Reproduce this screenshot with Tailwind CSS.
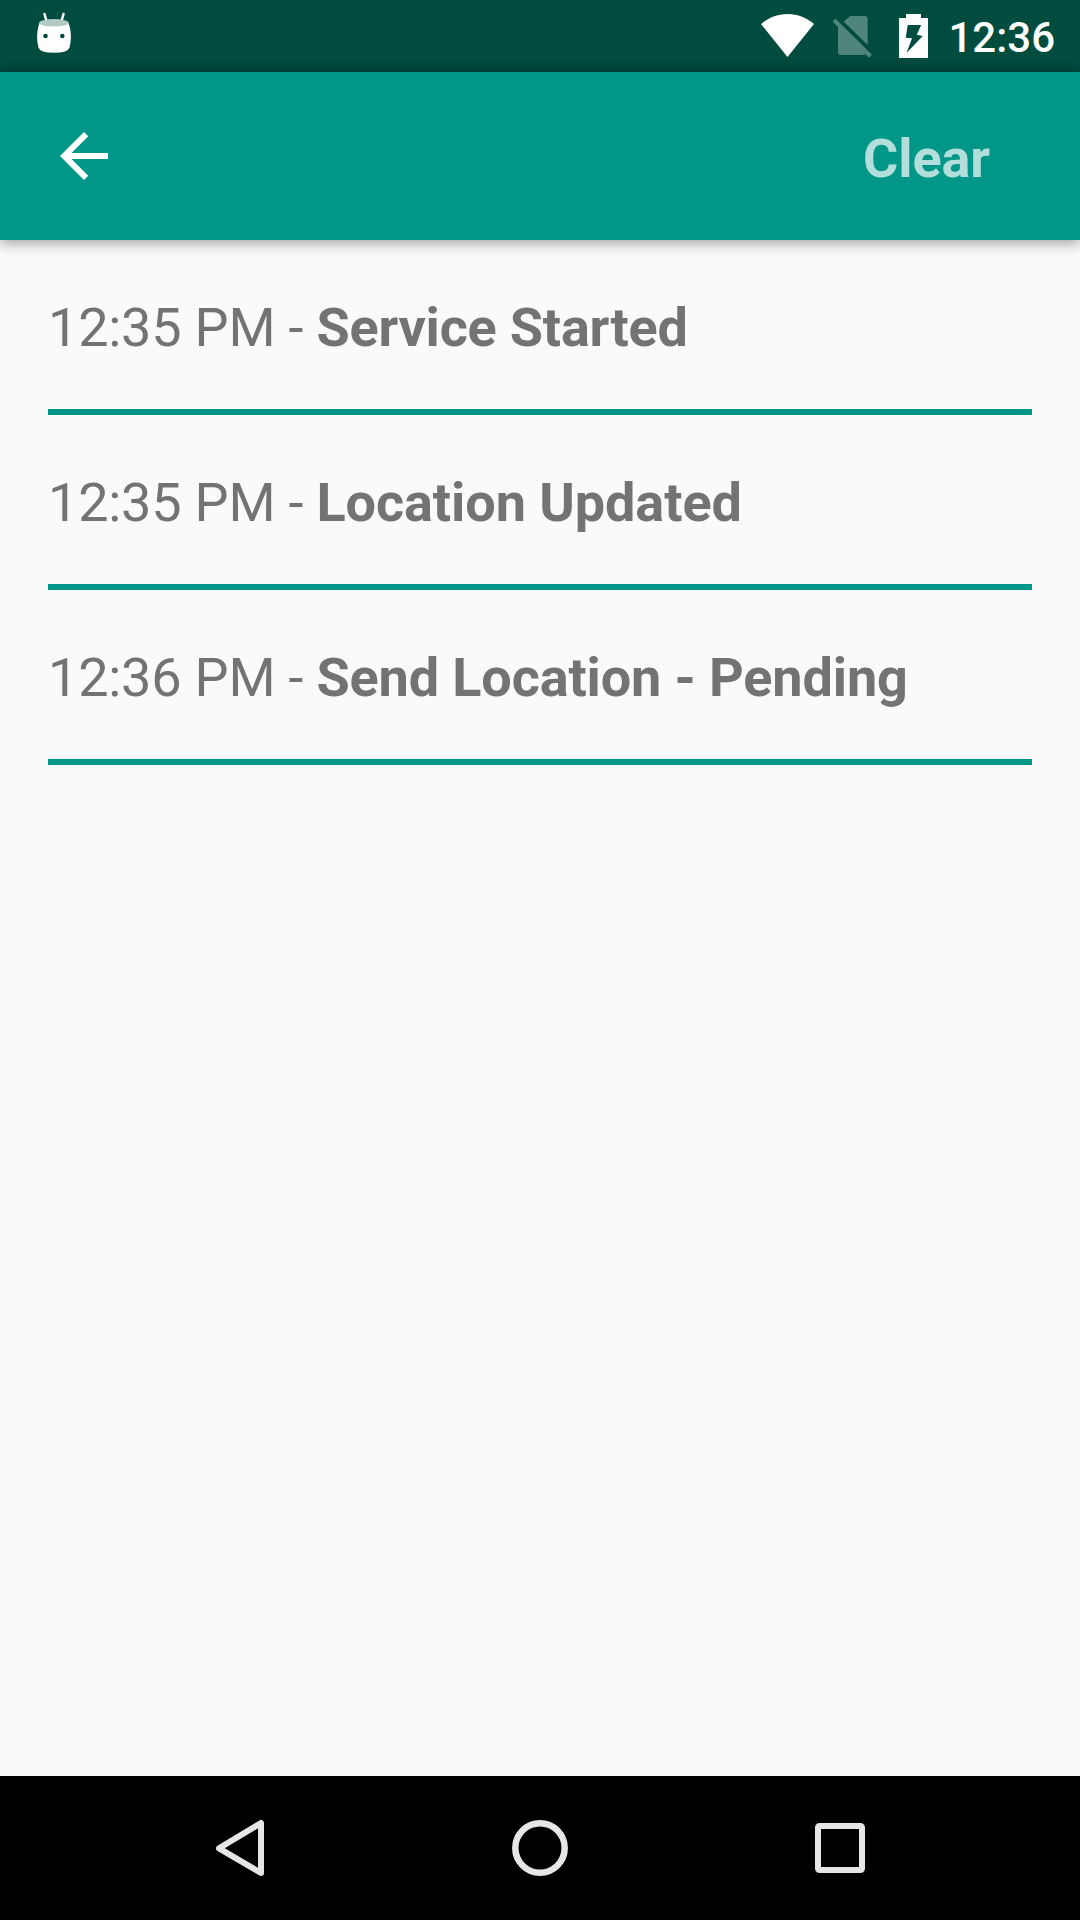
<!DOCTYPE html>
<html lang="en">
<head>
<meta charset="utf-8">
<title>Event log</title>
<script src="https://cdn.jsdelivr.net/npm/@tailwindcss/browser@4"></script>
</head>
<body class="bg-[#fafafa]">
<div class="flex h-[1920px] w-[1080px] flex-col overflow-hidden font-['Roboto',sans-serif]">
  <!-- Status bar -->
  <div class="flex h-[72px] shrink-0 items-center justify-between bg-[#004c3f] bg-linear-to-b from-[#004c3f] from-80% to-[#00443a] pr-[25px] pl-[30px] text-white">
    <svg class="h-[72px] w-12" viewBox="30 0 48 72" fill="none">
      <path d="M44.500 14L47 23M63.500 14L61 23" stroke="#fff" stroke-width="2.500" stroke-linecap="round"/>
      <path d="M39.500 23C36.500 31 36.500 40 38.500 47.500Q40 52.800 54 52.800Q68 52.800 69.500 47.500C71.500 40 71.500 31 68.500 23Z" fill="#fff"/>
      <ellipse cx="54" cy="22.800" rx="15" ry="3.700" fill="#b3c9c5"/>
      <circle cx="45.500" cy="36" r="2.300" fill="#004c3f"/>
      <circle cx="62.300" cy="36" r="2.300" fill="#004c3f"/>
    </svg>
    <div class="flex items-center">
      <svg class="h-[72px] w-[60px]" viewBox="760 0 60 72" fill="#fff">
        <path d="M787.500 57L761 24C768 18 777 14 787.500 14S807 18 814 24Z"/>
      </svg>
      <svg class="h-[72px] w-[60px]" viewBox="820 0 60 72" fill="#50857b">
        <path d="M850 16H864.500Q867.700 16 867.700 19.200V45L843.800 21.800Z"/>
        <path d="M835.300 18.500L872 54.800L869.200 57.800L865.500 54.300Q864.700 55 863.500 55H841.200Q838 55 838 51.800V27L832.500 21.500Z"/>
      </svg>
      <svg class="h-[72px] w-[68px]" viewBox="880 0 68 72" fill="#fff">
        <path fill-rule="evenodd" d="M906 14H921V18H928V58H899V18H906ZM907.700 25L905.700 37.700L912 38.300L906.500 53L922.700 36L916.700 34.700L921.200 25Z"/>
      </svg>
      <span class="pt-1 text-[42px] leading-[68px] font-medium">12:36</span>
    </div>
  </div>

  <!-- App bar -->
  <header class="relative flex h-[168px] shrink-0 items-center justify-between bg-[#009688] pr-[90px] pl-12 shadow-[0_4px_12px_rgba(0,0,0,0.33)]">
    <svg class="size-[72px]" viewBox="0 0 24 24" fill="#fff"><path d="M20 11H7.830l5.590-5.590L12 4l-8 8 8 8 1.410-1.410L7.830 13H20v-2z"/></svg>
    <button class="pt-[5px] text-[54px] leading-[64px] font-bold tracking-[-0.1px] text-[#b2dfdb]">Clear</button>
  </header>

  <!-- Event log -->
  <main class="flex-1 px-12 text-[54px] leading-[64px] tracking-[-0.22px] text-[#737373]">
    <div class="flex h-[175px] items-center border-b-6 border-[#009688] pt-[6px]"><p>12:35 PM - <b class="tracking-[-0.2px]">Service Started</b></p></div>
    <div class="flex h-[175px] items-center border-b-6 border-[#009688] pt-[6px]"><p>12:35 PM - <b class="tracking-[-0.07px]">Location Updated</b></p></div>
    <div class="flex h-[175px] items-center border-b-6 border-[#009688] pt-[6px]"><p>12:36 PM - <b class="tracking-[-0.13px]">Send Location - Pending</b></p></div>
  </main>

  <!-- Navigation bar -->
  <nav class="flex h-36 shrink-0 items-center justify-center gap-[228px] bg-black">
    <svg class="size-[72px]" viewBox="204 1812 72 72" fill="none" stroke="#e6e6e6" stroke-width="6" stroke-linejoin="round"><path d="M219 1848.300L261 1823V1873Z"/></svg>
    <svg class="size-[72px]" viewBox="504 1812 72 72" fill="none" stroke="#e6e6e6" stroke-width="6.500"><circle cx="540" cy="1848" r="24.700"/></svg>
    <svg class="size-[72px]" viewBox="804 1812 72 72" fill="none" stroke="#e6e6e6" stroke-width="6"><rect x="818" y="1826" width="44" height="44" rx="1.500"/></svg>
  </nav>
</div>
</body>
</html>
